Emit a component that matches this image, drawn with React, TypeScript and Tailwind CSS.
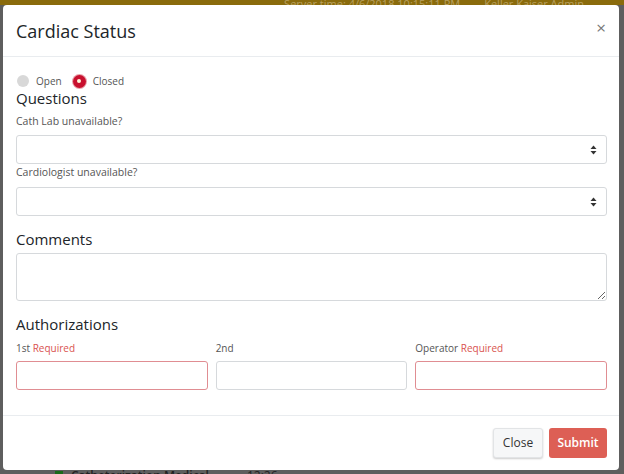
import React from 'react';

const font = { fontFamily: '"Open Sans", "Noto Sans", sans-serif' };

function SelectBox() {
  return (
    <div className="flex h-[29px] items-center justify-end rounded-[3px] border border-[#d6d9dc] bg-white pr-[9px]">
      <svg width="7" height="10" viewBox="0 0 7 10">
        <path d="M3.5 0.5 L6.5 4 L0.5 4 Z" fill="#333" />
        <path d="M3.5 9.5 L6.5 6 L0.5 6 Z" fill="#333" />
      </svg>
    </div>
  );
}

function Radio({ checked, label }: { checked?: boolean; label: string }) {
  return (
    <label className="flex items-center gap-[7px]">
      {checked ? (
        <span className="flex h-[13px] w-[13px] items-center justify-center rounded-full bg-[#c8102e] ring-1 ring-[#e8a0a8]">
          <span className="h-[4px] w-[4px] rounded-full bg-[#fff6d8]" />
        </span>
      ) : (
        <span className="h-[12px] w-[12px] rounded-full bg-[#d8d8d8]" />
      )}
      <span className="text-[10px] text-[#555]">{label}</span>
    </label>
  );
}

export default function App() {
  const auths = [
    { name: '1st', required: true },
    { name: '2nd', required: false },
    { name: 'Operator', required: true },
  ];

  return (
    <div className="flex h-[474px] w-[624px] flex-col overflow-hidden bg-[#5e5e5e]" style={font}>
      {/* dimmed page top bar */}
      <div className="flex h-[5px] shrink-0 items-start justify-end gap-6 overflow-hidden bg-[#8a6b0c] pr-10 text-[11px] leading-[11px] text-[#b8a060]">
        <span className="-mt-[2px]">Server time: 4/6/2018 10:15:11 PM</span>
        <span className="-mt-[2px]">Keller Kaiser Admin</span>
      </div>

      <div className="mx-[3px] flex h-[465px] w-[616px] shrink-0 flex-col rounded-[4px] bg-white">
        {/* header */}
        <div className="flex h-[52px] items-center justify-between border-b border-[#e9ecef] pl-[13px] pr-[13px]">
          <h5 className="text-[18px] leading-none text-[#212529]">Cardiac Status</h5>
          <span className="-mt-[6px] text-[17px] leading-none text-[#777]">×</span>
        </div>

        {/* body */}
        <div className="flex flex-col pl-[13px] pr-[12px] pb-[25px] pt-[17px] text-[#212529]">
          <div className="flex h-[14px] items-center gap-[11px] pl-[1px]">
            <Radio label="Open" />
            <Radio checked label="Closed" />
          </div>

          <div className="mt-[1px] text-[15px] leading-[18px]">Questions</div>
          <div className="mt-[7px] text-[10.5px] leading-[14px] text-[#555]">Cath Lab unavailable?</div>
          <div className="mt-[7px]">
            <SelectBox />
          </div>
          <div className="mt-[1px] text-[10.5px] leading-[14px] text-[#555]">Cardiologist unavailable?</div>
          <div className="mt-[8px]">
            <SelectBox />
          </div>

          <div className="mt-[14px] text-[15px] leading-[18px]">Comments</div>
          <textarea className="mt-[5px] block h-[48px] w-full rounded-[3px] border border-[#d6d9dc] bg-white outline-none" />

          <div className="mt-[14px] text-[15px] leading-[18px]">Authorizations</div>
          <div className="mt-[8px] grid grid-cols-3 gap-x-[8px]">
            {auths.map((a) => (
              <div key={a.name} className="flex flex-col">
                <div className="text-[10px] leading-[14px] text-[#555]">
                  {a.name} {a.required && <span className="text-[#d9534f]">Required</span>}
                </div>
                <div
                  className={
                    a.required
                      ? 'mt-[6px] h-[29px] rounded-[3px] border border-[#e08d92] bg-white'
                      : 'mt-[6px] h-[29px] rounded-[3px] border border-[#d6d9dc] bg-white'
                  }
                />
              </div>
            ))}
          </div>
        </div>

        {/* footer */}
        <div className="flex flex-1 items-start justify-end gap-[6px] border-t border-[#e9ecef] pr-[12px] pt-[12px]">
          <button className="h-[30px] w-[50px] rounded-[3px] border border-[#e2e4e6] bg-[#f6f7f8] text-[12px] text-[#333] shadow-[0_1px_2px_rgba(0,0,0,0.2)]">
            Close
          </button>
          <button className="h-[30px] w-[58px] rounded-[3px] bg-[#dd5f55] text-[12px] font-semibold text-white">
            Submit
          </button>
        </div>
      </div>

      {/* dimmed page content peeking below */}
      <div className="flex h-[4px] shrink-0 items-start gap-2 overflow-hidden pl-[55px] text-[12px] leading-none text-[#222]">
        <span className="mt-[1px] h-[6px] w-[8px] bg-[#1a6b1a]" />
        <span className="font-semibold">Catheterization Medical</span>
        <span className="ml-[30px]">12:26</span>
      </div>
    </div>
  );
}
